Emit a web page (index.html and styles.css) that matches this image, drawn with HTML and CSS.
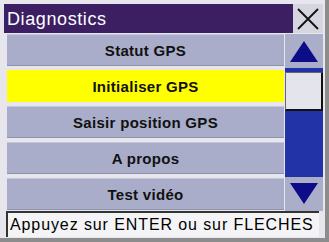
FILE: index.html
```html
<!DOCTYPE html>
<html>
<head>
<meta charset="utf-8">
<link rel="stylesheet" href="styles.css">
</head>
<body>
<div class="frame">
  <div class="titlebar">
    <div class="title">Diagnostics</div>
    <div class="close">
      <svg width="24" height="24" viewBox="0 0 24 24"><path d="M2 2 L22 22 M22 2 L2 22" stroke="#111" stroke-width="1.8" fill="none"/></svg>
    </div>
  </div>
  <div class="main">
    <div class="menu">
      <div class="row">Statut GPS</div>
      <div class="row sel">Initialiser GPS</div>
      <div class="row">Saisir position GPS</div>
      <div class="row">A propos</div>
      <div class="row">Test vidéo</div>
    </div>
    <div class="scroll">
      <div class="btn up"><svg width="30" height="24" viewBox="0 0 30 24"><polygon points="15,2 29,23 1,23" fill="#0d0d88"/></svg></div>
      <div class="track">
        <div class="thumb"></div>
      </div>
      <div class="btn down"><svg width="30" height="24" viewBox="0 0 30 24"><polygon points="1,1 29,1 15,22" fill="#0d0d88"/></svg></div>
    </div>
  </div>
  <div class="status">Appuyez sur ENTER ou sur FLECHES</div>
</div>
</body>
</html>
```
FILE: styles.css
```css
html, body {
  margin: 0;
  padding: 0;
}
body {
  width: 329px;
  height: 242px;
  background: #8c8c8c;
  overflow: hidden;
  font-family: "Liberation Sans", Arial, sans-serif;
}
.frame {
  width: 325px;
  height: 238px;
  box-sizing: border-box;
  background: #e6e6ec;
  padding: 4px 2px 0 4px;
  display: flex;
  flex-direction: column;
}
.titlebar {
  display: flex;
  height: 29px;
}
.title {
  flex: 1;
  background: #3c1f62;
  color: #fff;
  font-size: 18px;
  letter-spacing: 0.6px;
  line-height: 30px;
  padding-left: 3px;
}
.close {
  width: 30px;
  background: #d6d6e0;
  display: flex;
  align-items: center;
  justify-content: center;
}
.main {
  display: flex;
  height: 177px;
  padding-top: 1px;
}
.menu {
  width: 277px;
  padding-left: 3px;
  display: flex;
  flex-direction: column;
  gap: 4px;
}
.row {
  height: 32px;
  box-sizing: border-box;
  background: #a9adc9;
  border-top: 1px solid #c4c6da;
  border-bottom: 1px solid #8f92ab;
  font-weight: bold;
  font-size: 15px;
  letter-spacing: 0.3px;
  color: #111;
  display: flex;
  align-items: center;
  justify-content: center;
}
.row.sel {
  background: #ffff00;
  border-color: #ffff00;
}
.scroll {
  width: 38px;
  margin-left: 1px;
  display: flex;
  flex-direction: column;
}
.btn {
  height: 34px;
  background: #aaaec8;
  display: flex;
  align-items: center;
  justify-content: center;
}
.track {
  flex: 1;
  background: #2233a8;
  padding-top: 4px;
  display: flex;
  flex-direction: column;
}
.thumb {
  height: 39px;
  box-sizing: border-box;
  background: #e4e4ec;
  border: 1px solid #666;
  border-right: 2px solid #111;
  border-bottom: 2px solid #111;
}
.status {
  height: 26px;
  box-sizing: border-box;
  margin-left: 2px;
  margin-right: 4px;
  background: #f4f4f6;
  border-top: 2px solid #333;
  border-left: 2px solid #333;
  font-size: 16px;
  letter-spacing: 0.9px;
  color: #000;
  line-height: 23px;
  padding-left: 2px;
  white-space: nowrap;
  overflow: hidden;
}
```
